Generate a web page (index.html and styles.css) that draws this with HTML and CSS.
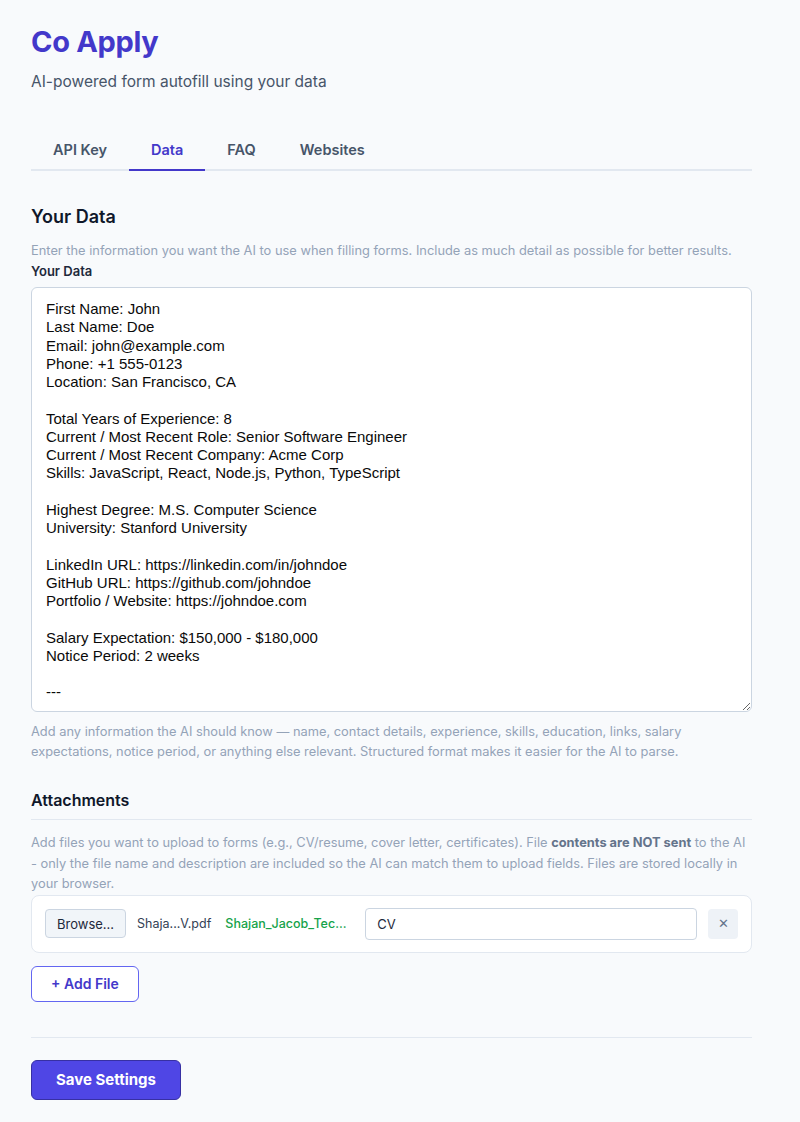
FILE: index.html
```html
<!DOCTYPE html>
<html lang="en">
<head>
  <meta charset="utf-8">
  <title>Co Apply</title>
  <link rel="stylesheet" href="styles.css">
</head>
<body>
  <div id="container">
    <div id="title">
      <h1>Co Apply</h1>
      <p>AI-powered form autofill using your data</p>
    </div>

    <div class="tabs">
      <span class="tab">API Key</span>
      <span class="tab active">Data</span>
      <span class="tab">FAQ</span>
      <span class="tab">Websites</span>
    </div>

    <div class="section">
      <h2>Your Data</h2>
      <p class="help">Enter the information you want the AI to use when filling forms. Include as much detail as possible for better results.</p>
      <label class="label" for="data">Your Data</label>
      <textarea id="data" class="data">First Name: John
Last Name: Doe
Email: john@example.com
Phone: +1 555-0123
Location: San Francisco, CA

Total Years of Experience: 8
Current / Most Recent Role: Senior Software Engineer
Current / Most Recent Company: Acme Corp
Skills: JavaScript, React, Node.js, Python, TypeScript

Highest Degree: M.S. Computer Science
University: Stanford University

LinkedIn URL: https://linkedin.com/in/johndoe
GitHub URL: https://github.com/johndoe
Portfolio / Website: https://johndoe.com

Salary Expectation: $150,000 - $180,000
Notice Period: 2 weeks

---


Additional notes can go here.</textarea>
      <p class="help note">Add any information the AI should know — name, contact details, experience, skills, education, links, salary expectations, notice period, or anything else relevant. Structured format makes it easier for the AI to parse.</p>
    </div>

    <div class="section attachments">
      <h3>Attachments</h3>
      <p class="help desc">Add files you want to upload to forms (e.g., CV/resume, cover letter, certificates). File <strong>contents are NOT sent</strong> to the AI - only the file name and description are included so the AI can match them to upload fields. Files are stored locally in your browser.</p>
      <div class="file-row">
        <button class="browse">Browse...</button>
        <span class="file-name">Shaja...V.pdf</span>
        <span class="file-saved">Shajan_Jacob_Tec...</span>
        <input class="file-desc" type="text" value="CV">
        <button class="remove">&#x2715;</button>
      </div>
      <button class="add-file">+ Add File</button>
    </div>

    <div class="footer">
      <button class="save">Save Settings</button>
    </div>
  </div>
</body>
</html>
```

FILE: styles.css
```css
body {
  font-family: Inter, "Noto Sans", sans-serif;
  margin: 0;
  padding: 0 31px;
  background: #f8fafc;
  color: #1e293b;
}
#container {
  width: 721px;
}
#title {
  padding-top: 22px;
}
#title h1 {
  margin: 0;
  font-size: 29px;
  font-weight: 700;
  color: #4338ca;
  letter-spacing: -0.3px;
  line-height: 40px;
}
#title p {
  margin: 10px 0 0;
  font-size: 15.5px;
  color: #475569;
  line-height: 20px;
}
.tabs {
  display: flex;
  margin-top: 48px;
  border-bottom: 2px solid #e2e8f0;
}
.tab {
  padding: 0 22px 9px;
  margin-bottom: -2px;
  font-size: 14.5px;
  font-weight: 600;
  color: #475569;
  line-height: 20px;
  border-bottom: 2px solid transparent;
}
.tab.active {
  color: #4338ca;
  border-bottom-color: #4338ca;
}
.section {
  margin-top: 35px;
}
h2 {
  margin: 0;
  font-size: 18px;
  font-weight: 600;
  color: #0f172a;
  line-height: 22px;
}
.help {
  margin: 13px 0 0;
  font-size: 12.85px;
  color: #94a3b8;
  line-height: 20px;
}
.label {
  display: block;
  font-size: 13px;
  font-weight: 600;
  color: #1e293b;
  line-height: 20px;
  margin-bottom: 6px;
}
.data {
  display: block;
  box-sizing: border-box;
  width: 100%;
  height: 425px;
  padding: 12px 14px;
  border: 1px solid #cbd5e1;
  border-radius: 6px;
  background: #fff;
  font-family: "Liberation Sans", Arial, sans-serif;
  font-size: 15px;
  line-height: 18.25px;
  color: #0a0a0a;
  resize: vertical;
  overflow: hidden;
}
.help.note {
  margin-top: 10px;
}
.attachments {
  margin-top: 27px;
}
h3 {
  margin: 0;
  padding-bottom: 8px;
  border-bottom: 1px solid #e2e8f0;
  font-size: 16px;
  font-weight: 600;
  color: #0f172a;
  line-height: 22px;
}
.help.desc {
  margin-top: 13px;
  line-height: 20.5px;
}
.help strong {
  color: #64748b;
}
.file-row {
  display: flex;
  align-items: center;
  gap: 11px;
  margin-top: 0;
  padding: 12px 13px;
  background: #fff;
  border: 1px solid #e2e8f0;
  border-radius: 8px;
}
.browse {
  height: 29px;
  padding: 0 11px;
  border: 1px solid #cbd5e1;
  border-radius: 4px;
  background: #f1f5f9;
  font-family: inherit;
  font-size: 13px;
  color: #1e293b;
}
.file-name {
  font-size: 12.5px;
  color: #334155;
}
.file-saved {
  margin-left: 3px;
  width: 129px;
  font-size: 12.5px;
  font-weight: 500;
  color: #16a34a;
}
.file-desc {
  flex: 1;
  height: 32px;
  box-sizing: border-box;
  padding: 0 11px;
  border: 1px solid #cbd5e1;
  border-radius: 4px;
  font-family: inherit;
  font-size: 13px;
  color: #1e293b;
}
.remove {
  width: 30px;
  height: 30px;
  border: none;
  border-radius: 4px;
  background: #eef2f7;
  color: #64748b;
  font-size: 13px;
}
.add-file {
  display: block;
  margin-top: 13px;
  height: 36px;
  padding: 0 19px;
  background: #fff;
  border: 1px solid #6366f1;
  border-radius: 6px;
  font-family: inherit;
  font-size: 14px;
  font-weight: 600;
  color: #4338ca;
}
.footer {
  margin-top: 35px;
  padding-top: 22px;
  border-top: 1px solid #e2e8f0;
}
.save {
  height: 40px;
  padding: 0 24px;
  background: #4f46e5;
  border: 1px solid #3730a3;
  border-radius: 6px;
  font-family: inherit;
  font-size: 15px;
  font-weight: 700;
  color: #fff;
}
```
